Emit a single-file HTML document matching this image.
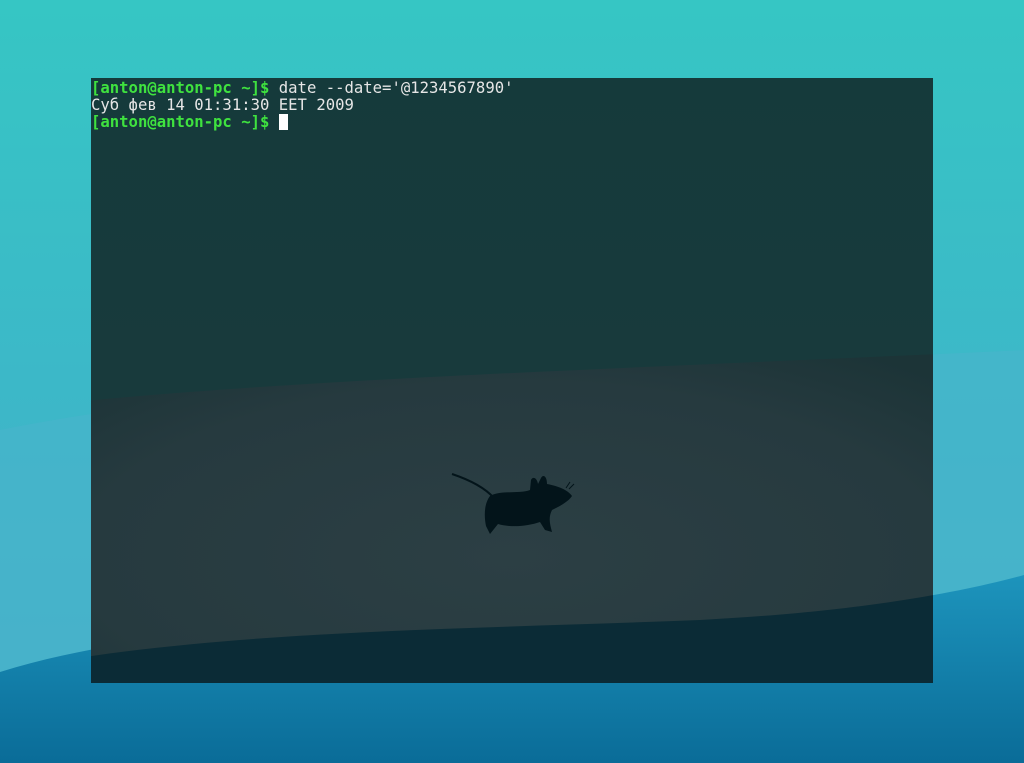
<!DOCTYPE html>
<html><head><meta charset="utf-8"><style>
html,body{margin:0;padding:0;width:1024px;height:763px;overflow:hidden;background:#2cb8c0}
svg{position:absolute;left:0;top:0}
.t{position:absolute;left:91px;top:80px;font-family:"DejaVu Sans Mono","Liberation Mono",monospace;font-size:15.6px;line-height:17px;color:#e6e6e6;white-space:pre}
.g{color:#3fe23f;font-weight:bold}
.c{display:inline-block;width:9px;height:16px;background:#fff;vertical-align:-3px}
</style></head><body>
<svg width="1024" height="763" viewBox="0 0 1024 763">
<defs>
<linearGradient id="bg" x1="0" y1="0" x2="0" y2="1">
<stop offset="0" stop-color="#36c6c4"/><stop offset="0.5" stop-color="#3cb8c8"/><stop offset="1" stop-color="#48acc8"/>
</linearGradient>
<linearGradient id="lo" x1="0" y1="0" x2="0" y2="1">
<stop offset="0" stop-color="#1d94bc"/><stop offset="1" stop-color="#0a6c98"/>
</linearGradient>
<radialGradient id="mid" cx="0.5" cy="0.5" r="0.6">
<stop offset="0" stop-color="#2c3f44"/><stop offset="0.7" stop-color="#263a3f"/><stop offset="1" stop-color="#1c3437"/>
</radialGradient>
<linearGradient id="top" x1="0" y1="0" x2="0" y2="1">
<stop offset="0" stop-color="#153a3b"/><stop offset="1" stop-color="#1b3a3d"/>
</linearGradient>
</defs>
<rect width="1024" height="763" fill="url(#bg)"/>
<path d="M0 430 C250 380 600 370 1024 350 L1024 763 L0 763Z" fill="#4ab4cc" opacity="0.6"/>
<path d="M0 672 C200 610 450 630 700 620 C850 612 950 595 1024 575 L1024 763 L0 763Z" fill="url(#lo)"/>
<rect x="91" y="78" width="842" height="605" fill="url(#top)"/>
<clipPath id="tc"><rect x="91" y="78" width="842" height="605"/></clipPath>
<g clip-path="url(#tc)">
<path d="M0 410 C250 380 600 370 1024 350 L1024 763 L0 763Z" fill="url(#mid)"/>
<path d="M0 672 C200 630 450 630 700 620 C850 612 950 595 1024 575 L1024 763 L0 763Z" fill="#0b2b36"/>
</g>
<g fill="#03141a">
<path d="M452 474 C470 480 485 488 494 498" stroke="#03141a" stroke-width="2" fill="none"/>
<path d="M490 496 C500 490 520 494 530 490 L531 480 C533 476 537 478 538 484 L541 478 C543 474 547 476 547 484 C558 486 568 490 572 496 C568 502 560 506 552 510 C548 518 550 524 552 532 L545 530 L540 522 C528 526 512 528 498 524 L490 534 L486 526 C484 516 484 504 490 496Z"/>
<path d="M566 488 L570 482 M569 489 L574 484" stroke="#03141a" stroke-width="1"/>
</g>
</svg>
<div class="t"><span class="g">[anton@anton-pc ~]$</span> date --date='@1234567890'
Суб фев 14 01:31:30 EET 2009
<span class="g">[anton@anton-pc ~]$</span> <span class="c"></span></div>
</body></html>
